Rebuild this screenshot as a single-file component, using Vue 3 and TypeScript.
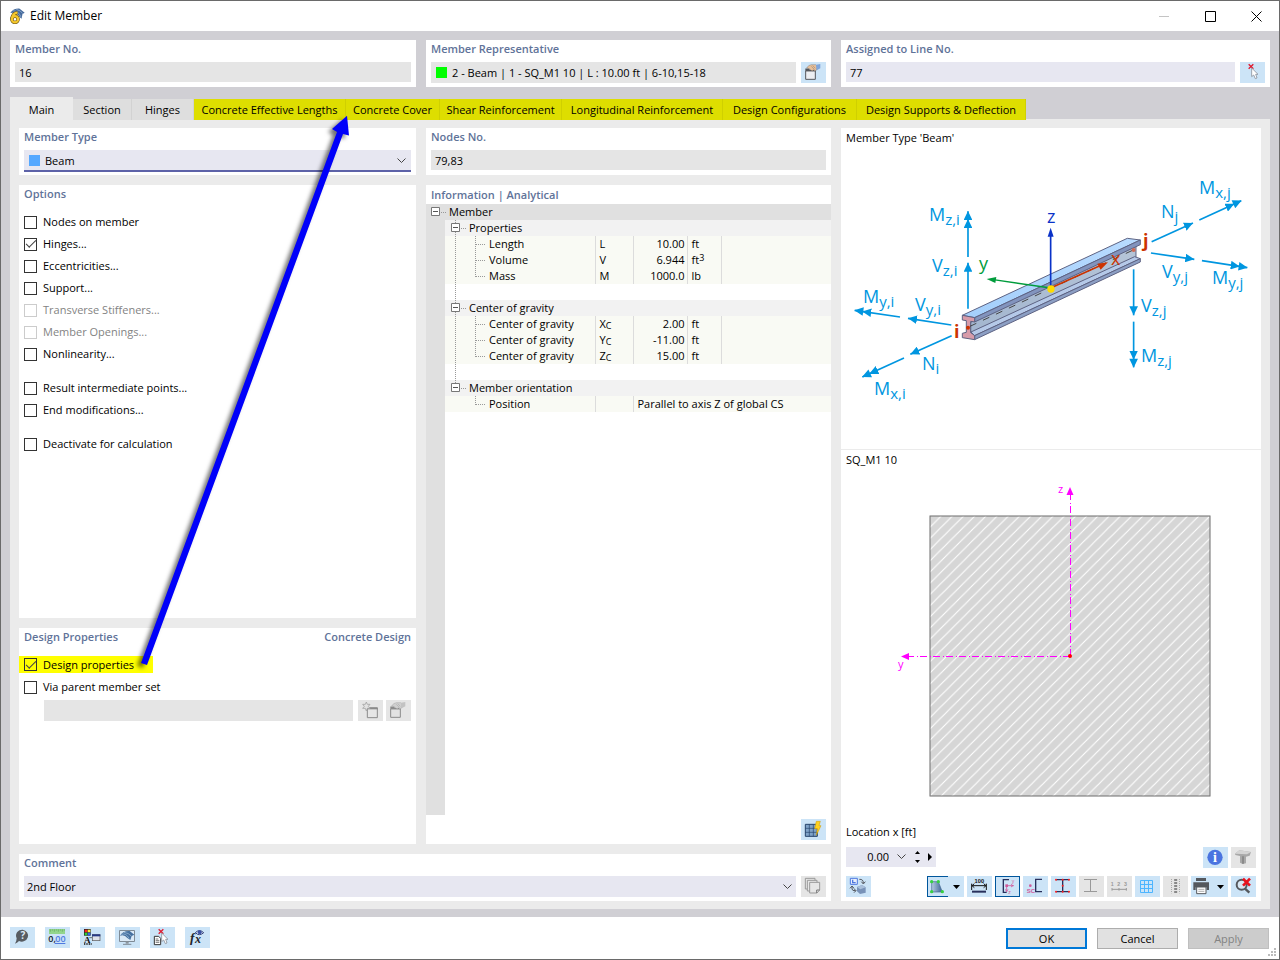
<script setup lang="ts">
import { ref } from 'vue'

interface Tab { label: string; highlighted: boolean }
interface Option { label: string; checked: boolean; disabled?: boolean; gapBefore?: boolean }
interface Leaf { name: string; symbol: string; sub?: string; value: string; unit: string; sup?: string }
interface Group { name: string; rows: Leaf[] }
interface ToolButton { icon: string; label: string; style?: string; menu?: boolean }
interface ForceLabel { main: string; sub: string; x: number; y: number }

const activeTab = ref('Main')
const tabs: Tab[] = [
  { label: 'Main', highlighted: false },
  { label: 'Section', highlighted: false },
  { label: 'Hinges', highlighted: false },
  { label: 'Concrete Effective Lengths', highlighted: true },
  { label: 'Concrete Cover', highlighted: true },
  { label: 'Shear Reinforcement', highlighted: true },
  { label: 'Longitudinal Reinforcement', highlighted: true },
  { label: 'Design Configurations', highlighted: true },
  { label: 'Design Supports & Deflection', highlighted: true },
]

const options = ref<Option[]>([
  { label: 'Nodes on member', checked: false },
  { label: 'Hinges...', checked: true },
  { label: 'Eccentricities...', checked: false },
  { label: 'Support...', checked: false },
  { label: 'Transverse Stiffeners...', checked: false, disabled: true },
  { label: 'Member Openings...', checked: false, disabled: true },
  { label: 'Nonlinearity...', checked: false },
  { label: 'Result intermediate points...', checked: false, gapBefore: true },
  { label: 'End modifications...', checked: false },
  { label: 'Deactivate for calculation', checked: false, gapBefore: true },
])
const designProperties = ref(true)
const viaParentSet = ref(false)

const groups: Group[] = [
  {
    name: 'Properties',
    rows: [
      { name: 'Length', symbol: 'L', value: '10.00', unit: 'ft' },
      { name: 'Volume', symbol: 'V', value: '6.944', unit: 'ft', sup: '3' },
      { name: 'Mass', symbol: 'M', value: '1000.0', unit: 'lb' },
    ],
  },
  {
    name: 'Center of gravity',
    rows: [
      { name: 'Center of gravity', symbol: 'X', sub: 'C', value: '2.00', unit: 'ft' },
      { name: 'Center of gravity', symbol: 'Y', sub: 'C', value: '-11.00', unit: 'ft' },
      { name: 'Center of gravity', symbol: 'Z', sub: 'C', value: '15.00', unit: 'ft' },
    ],
  },
]

const forces: ForceLabel[] = [
  { main: 'M', sub: 'z,i', x: 929, y: 221 },
  { main: 'V', sub: 'z,i', x: 932, y: 272 },
  { main: 'M', sub: 'y,i', x: 863, y: 303 },
  { main: 'V', sub: 'y,i', x: 915, y: 311 },
  { main: 'N', sub: 'i', x: 922, y: 370 },
  { main: 'M', sub: 'x,i', x: 874, y: 395 },
  { main: 'M', sub: 'x,j', x: 1199, y: 194 },
  { main: 'N', sub: 'j', x: 1161, y: 218 },
  { main: 'V', sub: 'y,j', x: 1162, y: 278 },
  { main: 'M', sub: 'y,j', x: 1212, y: 284 },
  { main: 'V', sub: 'z,j', x: 1141, y: 312 },
  { main: 'M', sub: 'z,j', x: 1141, y: 362 },
]

const cursor = '<path d="M35 18V44L41 39L46 50L51 48L47 37H54Z" fill="#fff" stroke="#8c929c" stroke-width="2.5"/>'
const redCross = '<path d="M26 7L40 20M40 7L26 20" stroke="#e0182d" stroke-width="4" fill="none"/>'
const handWindow = (line: string, fill: string, hand: string, cuff: string) =>
  `<path d="M14 26H43V52H14Z" fill="${fill}" stroke="${line}" stroke-width="3"/><path d="M13 22H26" stroke="${line}" stroke-width="5"/><path d="M14 26H43" stroke="${line}" stroke-width="4"/>
   <path d="M17 18L23 11L31 8L44 8L48 12L47 24L41 27L37 23L34 27L29 24L25 20Z" fill="${hand}" stroke="${line}" stroke-width="1"/><path d="M31 13L41 23M35 11L43 19" stroke="${line}" stroke-width="1"/><path d="M45 8L58 6V19L47 25Z" fill="${cuff}"/>`

const icons: Record<string, string> = {
  handWindow: handWindow('#55575c', '#eceef2', '#e8bf98', '#7fa6dc'),
  handWindowOff: handWindow('#8b8b8b', '#e2e2e2', '#cfcfcf', '#c2c2c2'),
  newOff: '<path d="M28 24H58V53H28Z" fill="#e6e6e6" stroke="#8b8b8b" stroke-width="3"/><path d="M27 25H59" stroke="#8b8b8b" stroke-width="6"/><path d="M25 6L28 13L36 13L31 19L36 25L28 25L25 33L22 25L14 25L19 19L14 13L22 13Z" fill="#e2e2e2" stroke="#a5a5a5" stroke-width="2.5"/>',
  pick: redCross + cursor,
  copyOff: '<path d="M13 7H42V39H13Z" fill="#e6e6e6" stroke="#999" stroke-width="3"/><path d="M19 13H48V45H19Z" fill="#e6e6e6" stroke="#999" stroke-width="3"/><path d="M26 19H56V42L48 51H26Z" fill="#e6e6e6" stroke="#999" stroke-width="3"/><path d="M56 42H47V51" fill="none" stroke="#777" stroke-width="3"/>',
  gridFlash: '<path d="M13 16H49V52H13Z" fill="#7fa3c8" stroke="#26446b" stroke-width="3"/><path d="M25 16V52M37 16V52M13 28H49M13 40H49" stroke="#26446b" stroke-width="2"/><path d="M46 7H58L54 20H60L46 49L49 29H41Z" fill="#ffd21f" stroke="#c99400" stroke-width="1.5"/>',
  info: '<circle cx="36" cy="31" r="23" fill="#4a74e0"/><text x="36" y="45" font-family="Liberation Serif, serif" font-weight="bold" font-size="42" text-anchor="middle" fill="#fff">i</text>',
  solidOff: '<path d="M12 20L25 10L60 15L56 26L45 29V49L35 51L27 47V27L13 24Z" fill="#a8a8a8"/><path d="M12 20L25 10L60 15L48 22Z" fill="#d4d4d4"/><path d="M36 28V50" stroke="#858585" stroke-width="5"/>',
  exchange: '<path d="M13 7H34V25H13Z" fill="#e8effc" stroke="#4e79e0" stroke-width="3"/><path d="M20 11V20H29" fill="none" stroke="#4e79e0" stroke-width="4"/><path d="M40 10Q52 9 52 21M46 17L52 24L58 17M18 32V39Q18 45 29 44M12 37L18 30L24 37M24 38L30 44L24 50" fill="none" stroke="#52565e" stroke-width="3"/><path d="M33 33L48 27L59 34V50L42 54L33 46Z" fill="#7892b8"/><path d="M33 33L48 27L59 34L43 40Z" fill="#a9c0dc"/>',
  shape: '<path d="M14 48V17H34L46 48Z" fill="url(#shape)" stroke="#3f6790" stroke-width="2"/><defs><linearGradient id="shape"><stop offset="0" stop-color="#b5cae2"/><stop offset="1" stop-color="#3c6494"/></linearGradient></defs><g fill="#37cf43"><circle cx="14" cy="17" r="5"/><circle cx="34" cy="17" r="5"/><circle cx="46" cy="47" r="5"/><circle cx="14" cy="47" r="5"/></g>',
  dimension: '<text x="37" y="20" font-family="Liberation Sans, sans-serif" font-weight="bold" font-size="17" text-anchor="middle" fill="#111">100</text><path d="M14 23V42M58 23V42M16 29H56M22 23L15 29L22 35M50 23L57 29L50 35" fill="none" stroke="#111" stroke-width="3"/><path d="M15 47H57" stroke="#28305c" stroke-width="6"/>',
  axes: '<path d="M42 11H25V49H35" fill="none" stroke="#28305c" stroke-width="4"/><path d="M35 29H57M35 29V47M48 25L54 29L48 33M31 40L35 47L39 40" fill="none" stroke="#d05a9b" stroke-width="2.5"/><rect x="31" y="25" width="8" height="8" fill="#d05a9b"/><g font-family="Liberation Sans, sans-serif" font-size="15" fill="#d05a9b"><text x="50" y="20">y</text><text x="40" y="53">z</text></g>',
  shear: '<path d="M57 10H38V47H57" fill="none" stroke="#28305c" stroke-width="4"/><circle cx="22" cy="29" r="4" fill="#d05a9b"/><text x="11" y="52" font-family="Liberation Sans, sans-serif" font-weight="bold" font-size="18" fill="#d05a9b">SC</text>',
  points: '<path d="M15 11H54M15 47H54M35 11V47" stroke="#28305c" stroke-width="4"/><g fill="#ff1e1e"><circle cx="15" cy="11" r="3"/><circle cx="35" cy="11" r="3"/><circle cx="54" cy="11" r="3"/><circle cx="35" cy="29" r="3"/><circle cx="15" cy="47" r="3"/><circle cx="35" cy="47" r="3"/><circle cx="54" cy="47" r="3"/></g>',
  sectionOff: '<path d="M15 10.500H54M15 46.500H54M34.500 10V47" stroke="#999" stroke-width="3"/>',
  numbersOff: '<g font-family="Liberation Sans, sans-serif" font-weight="bold" font-size="16" fill="#999"><text x="11" y="30">1</text><text x="31" y="30">2</text><text x="51" y="30">3</text></g><path d="M15 40H58M15 36V44M36 36V44M58 36V44" stroke="#999" stroke-width="3"/>',
  grid: '<path d="M16.500 13.500H52.500V49.500H16.500ZM28.500 13V49M40.500 13V49M16 25.500H53M16 37.500H53" fill="none" stroke="#4db5ff" stroke-width="3"/>',
  scaleOff: '<path d="M38 9V52" stroke="#888" stroke-width="9" stroke-dasharray="6 3"/><path d="M25.500 9V52M49.500 9V52" stroke="#aaa" stroke-width="3" stroke-dasharray="3 3"/>',
  print: '<path d="M15 6H45V15H15Z" fill="#55585d"/><path d="M7 19H54V42H47V34H14V42H7Z" fill="#55585d"/><path d="M17 33H45V53H17Z" fill="#fff" stroke="#55585d" stroke-width="3"/><path d="M22 40H40M22 46H40" stroke="#888" stroke-width="2"/>',
  zoomOff: '<circle cx="32" cy="26" r="15" fill="#d9e7f3" stroke="#55585d" stroke-width="6"/><path d="M42 38L55 50" stroke="#55585d" stroke-width="7"/><path d="M36 8L57 29M57 8L36 29" stroke="#e8121c" stroke-width="8"/>',
  help: '<path d="M38 8A19 18 0 1 1 27 42Q23 47 15 50Q20 42 20 34A19 18 0 0 1 38 8Z" fill="#575c62"/><text x="39" y="37" font-family="Open Sans, sans-serif" font-weight="bold" font-size="30" text-anchor="middle" fill="#dce9f5">?</text>',
  units: '<rect x="12" y="6" width="48" height="15" fill="#92d58c"/><path d="M16 7V14M22 7V11M28 7V14M34 7V11M40 7V14M46 7V11M52 7V14M58 7V11" stroke="#5ea65a" stroke-width="2"/><g font-family="Open Sans, sans-serif" font-weight="600" font-size="27"><text x="10" y="46" fill="#171c2a">0,</text><text x="31" y="46" fill="#4e79e0">00</text></g><path d="M29 49.500H61" stroke="#4e79e0" stroke-width="3"/>',
  display: '<rect x="12" y="6" width="20" height="20" fill="#222"/><rect x="14" y="8" width="8" height="8" fill="#f22"/><rect x="23" y="8" width="8" height="8" fill="#fe3"/><rect x="14" y="17" width="8" height="8" fill="#3c3"/><rect x="23" y="17" width="8" height="8" fill="#36e"/><text x="22" y="47" font-family="Liberation Serif, serif" font-weight="bold" font-size="27" text-anchor="middle" fill="#111">A</text><path d="M12 51H35" stroke="#111" stroke-width="4" stroke-dasharray="3 2"/><path d="M28 32H37" stroke="#333" stroke-width="2"/><rect x="37" y="23" width="23" height="18" fill="#dfe2e9" stroke="#555" stroke-width="2"/><rect x="36" y="22" width="25" height="6" fill="#273a86"/>',
  monitor: '<path d="M13.500 10.500H58.500V43.500H13.500Z" fill="#dbe9f6" stroke="#7f8b96" stroke-width="3"/><path d="M32 44H41V50H32Z" fill="#8a949d"/><path d="M24 52H49" stroke="#7f8b96" stroke-width="3"/><path d="M15 26Q23 11 44 12L58 23L50 27L46 39L37 33Q28 21 15 26Z" fill="#46709f"/><path d="M19 22Q33 17 42 34M27 16Q41 18 49 27" fill="none" stroke="#a6c3e0" stroke-width="2"/>',
  listPick: redCross + '<path d="M13 28H26L32 34V53H13Z" fill="#fff" stroke="#333" stroke-width="3"/><path d="M17 36H25M17 41H28M17 46H28" stroke="#333" stroke-width="2"/>' + cursor,
  formula: '<g font-family="Liberation Serif, serif" font-style="italic" font-weight="bold" fill="#20242c"><text x="15" y="45" font-size="40">f</text><text x="30" y="48" font-size="36">x</text></g><path d="M31 17Q43 5 56 17Q43 29 31 17Z" fill="#e7efff" stroke="#313e74" stroke-width="3"/><circle cx="44" cy="16" r="6" fill="#3950a2"/>',
}

const sectionTools: ToolButton[] = [
  { icon: 'shape', label: 'Shape display', style: 'split-on', menu: true },
  { icon: 'dimension', label: 'Dimensions' },
  { icon: 'axes', label: 'Principal axes', style: 'on' },
  { icon: 'shear', label: 'Shear center' },
  { icon: 'points', label: 'Stress points' },
  { icon: 'sectionOff', label: 'Section parts', style: 'off' },
  { icon: 'numbersOff', label: 'Numbering', style: 'off' },
  { icon: 'grid', label: 'Grid' },
  { icon: 'scaleOff', label: 'Scale', style: 'off' },
  { icon: 'print', label: 'Print', menu: true },
  { icon: 'zoomOff', label: 'Reset zoom' },
]
const footerTools: ToolButton[] = [
  { icon: 'help', label: 'Help' },
  { icon: 'units', label: 'Units and decimal places' },
  { icon: 'display', label: 'Display properties' },
  { icon: 'monitor', label: 'View' },
  { icon: 'listPick', label: 'Select from list' },
  { icon: 'formula', label: 'Formula' },
]
</script>

<template>
  <div class="window">
    <header class="titlebar">
      <svg class="app-icon" viewBox="0 0 51 51" aria-hidden="true">
        <path d="M4 16Q14 1 34 2L50 15L43 19L40 34L32 27Q24 12 4 16Z" fill="#456a9c" />
        <path d="M13 9Q30 9 38 28M23 4Q38 8 44 18" fill="none" stroke="#a9c4e2" stroke-width="2" />
        <path d="M27 15Q10 17 10 36" fill="none" stroke="#6b5512" stroke-width="11" />
        <circle cx="19" cy="36" r="10" fill="none" stroke="#6b5512" stroke-width="11" />
        <path d="M27 15Q10 17 10 36" fill="none" stroke="#f4c72c" stroke-width="7" />
        <circle cx="19" cy="36" r="10" fill="none" stroke="#f4c72c" stroke-width="7" />
      </svg>
      <h1>Edit Member</h1>
      <button class="sys" aria-label="Minimize" disabled><svg viewBox="0 0 11 11"><path d="M0 5.500H10" stroke="#c4c4c4" /></svg></button>
      <button class="sys" aria-label="Maximize"><svg viewBox="0 0 11 11"><path d="M.5 .5H10.500V10.500H.5Z" fill="none" stroke="#000" /></svg></button>
      <button class="sys" aria-label="Close"><svg viewBox="0 0 11 11"><path d="M.5 .5L10.500 10.500M10.500 .5L.5 10.500" stroke="#000" /></svg></button>
    </header>

    <main class="body">
      <div class="summary">
        <section class="card">
          <label class="caption" for="member-no">Member No.</label>
          <div class="line"><input id="member-no" class="field readonly" value="16" readonly /></div>
        </section>
        <section class="card">
          <label class="caption" for="member-rep">Member Representative</label>
          <div class="line">
            <div class="field readonly with-swatch">
              <i class="swatch green"></i>
              <input id="member-rep" value="2 - Beam | 1 - SQ_M1 10 | L : 10.00 ft | 6-10,15-18" readonly />
            </div>
            <button class="tool" aria-label="Edit representative"><svg viewBox="0 0 75 63" v-html="icons.handWindow" /></button>
          </div>
        </section>
        <section class="card">
          <label class="caption" for="line-no">Assigned to Line No.</label>
          <div class="line">
            <input id="line-no" class="field" value="77" />
            <button class="tool" aria-label="Pick line"><svg viewBox="0 0 75 63" v-html="icons.pick" /></button>
          </div>
        </section>
      </div>

      <nav class="tabs" role="tablist">
        <button
          v-for="tab in tabs" :key="tab.label" role="tab" class="tab"
          :class="{ active: tab.label === activeTab, highlighted: tab.highlighted }"
          :aria-selected="tab.label === activeTab" @click="activeTab = tab.label"
        >{{ tab.label }}</button>
      </nav>

      <div class="page">
        <div class="left-area">
          <div class="column">
            <section class="card">
              <label class="caption" for="member-type">Member Type</label>
              <div class="line">
                <div class="field with-swatch focused">
                  <i class="swatch blue"></i>
                  <select id="member-type"><option>Beam</option></select>
                  <svg class="chevron" viewBox="0 0 9 6"><path d="M.5 .5L4.500 4.500L8.500 .5" /></svg>
                </div>
              </div>
            </section>

            <section class="card options">
              <h2 class="caption">Options</h2>
              <div class="checks">
                <label v-for="opt in options" :key="opt.label" class="check" :class="{ gap: opt.gapBefore, disabled: opt.disabled }">
                  <input v-model="opt.checked" type="checkbox" :disabled="opt.disabled" />{{ opt.label }}
                </label>
              </div>
            </section>

            <section class="card design">
              <div class="heading-pair">
                <h2 class="caption">Design Properties</h2>
                <h2 class="caption">Concrete Design</h2>
              </div>
              <div class="checks">
                <label class="check marked"><input v-model="designProperties" type="checkbox" /><span>Design properties</span></label>
                <label class="check"><input v-model="viaParentSet" type="checkbox" />Via parent member set</label>
              </div>
              <div class="line parent-set">
                <input class="field readonly" aria-label="Parent member set" disabled />
                <button class="tool off" aria-label="New member set" disabled><svg viewBox="0 0 75 63" v-html="icons.newOff" /></button>
                <button class="tool off last" aria-label="Edit member set" disabled><svg viewBox="0 0 75 63" v-html="icons.handWindowOff" /></button>
              </div>
            </section>
          </div>

          <div class="column">
            <section class="card">
              <label class="caption" for="nodes-no">Nodes No.</label>
              <div class="line"><input id="nodes-no" class="field readonly" value="79,83" readonly /></div>
            </section>

            <section class="card info">
              <h2 class="caption">Information | Analytical</h2>
              <div class="tree">
                <table>
                  <colgroup><col class="c-gutter" /><col class="c-name" /><col class="c-symbol" /><col class="c-value" /><col class="c-unit" /><col /></colgroup>
                  <tbody>
                    <tr class="root">
                      <th colspan="6">
                        <svg class="mark" width="23" height="16"><path class="dots" d="M15 8.500H21" /><path class="box" d="M5.500 3.500H13.500V11.500H5.500Z" /><path class="minus" d="M7 7.500H12" /></svg>Member
                      </th>
                    </tr>
                    <template v-for="group in groups" :key="group.name">
                      <tr class="group">
                        <td class="gutter"></td>
                        <th colspan="5">
                          <svg class="mark" width="24" height="16"><path class="dots" d="M10.500 0V16M16 8.500H22" /><path class="box" d="M6.500 3.500H14.500V11.500H6.500Z" /><path class="minus" d="M8 7.500H13" /></svg>{{ group.name }}
                        </th>
                      </tr>
                      <tr v-for="(row, i) in group.rows" :key="row.symbol" class="leaf">
                        <td class="gutter"></td>
                        <td class="name">
                          <svg class="mark" width="44" height="16"><path class="dots" :d="i === group.rows.length - 1 ? 'M10.500 0V16M30.500 0V9M31 8.500H41' : 'M10.500 0V16M30.500 0V16M31 8.500H41'" /></svg>{{ row.name }}
                        </td>
                        <td>{{ row.symbol }}<sub v-if="row.sub">{{ row.sub }}</sub></td>
                        <td class="value">{{ row.value }}</td>
                        <td>{{ row.unit }}<sup v-if="row.sup">{{ row.sup }}</sup></td>
                        <td></td>
                      </tr>
                      <tr class="blank">
                        <td class="gutter"></td>
                        <td colspan="5" class="name"><svg class="mark" width="24" height="16"><path class="dots" d="M10.500 0V16" /></svg></td>
                      </tr>
                    </template>
                    <tr class="group">
                      <td class="gutter"></td>
                      <th colspan="5">
                        <svg class="mark" width="24" height="16"><path class="dots" d="M10.500 0V4M16 8.500H22" /><path class="box" d="M6.500 3.500H14.500V11.500H6.500Z" /><path class="minus" d="M8 7.500H13" /></svg>Member orientation
                      </th>
                    </tr>
                    <tr class="leaf">
                      <td class="gutter"></td>
                      <td class="name"><svg class="mark" width="44" height="16"><path class="dots" d="M30.500 0V9M31 8.500H41" /></svg>Position</td>
                      <td></td>
                      <td colspan="3">Parallel to axis Z of global CS</td>
                    </tr>
                  </tbody>
                </table>
              </div>
              <div class="info-tools">
                <button class="tool" aria-label="Recalculate"><svg viewBox="0 0 75 63" v-html="icons.gridFlash" /></button>
              </div>
            </section>
          </div>

          <section class="card comment">
            <label class="caption" for="comment">Comment</label>
            <div class="line">
              <div class="field combo">
                <select id="comment"><option>2nd Floor</option></select>
                <svg class="chevron" viewBox="0 0 9 6"><path d="M.5 .5L4.500 4.500L8.500 .5" /></svg>
              </div>
              <button class="tool off" aria-label="Comment library" disabled><svg viewBox="0 0 75 63" v-html="icons.copyOff" /></button>
            </div>
          </section>
        </div>

        <section class="card preview">
          <h2 class="plain">Member Type 'Beam'</h2>
          <svg class="beam" viewBox="841 148 420 301" role="img" aria-label="Beam with internal forces">
            <defs>
              <linearGradient id="top" x1="0" y1="1" x2="1" y2="0"><stop offset="0" stop-color="#a4cffb" /><stop offset="1" stop-color="#b8dbff" /></linearGradient>
              <linearGradient id="web" x1="0" y1="1" x2="1" y2="0"><stop offset="0" stop-color="#a3b6cf" /><stop offset="1" stop-color="#b6c5d8" /></linearGradient>
              <marker id="force" markerUnits="userSpaceOnUse" markerWidth="30" markerHeight="26" refX="27" refY="13" orient="auto"><path d="M0 0L27 13L0 26Z" fill="#0096e0" /></marker>
              <marker id="moment" markerUnits="userSpaceOnUse" markerWidth="54" markerHeight="26" refX="50" refY="13" orient="auto"><path d="M0 0L27 13L0 26ZM24 0L51 13L24 26Z" fill="#0096e0" /></marker>
            </defs>
            <g transform="translate(840 160) scale(.3333)">
              <g stroke="#5d6283" stroke-width="3" stroke-linejoin="round">
                <path d="M392 487L888 258V292L392 520Z" fill="url(#web)" />
                <path d="M393 516L884 290L901 296L404 527Z" fill="#b5c9e8" />
                <path d="M404 527L901 296V306L404 539Z" fill="#8c9fc4" />
                <path d="M367 466L862 235L901 240L404 473Z" fill="url(#top)" />
                <path d="M404 473L901 240V254L404 486Z" fill="#8294be" />
                <path d="M367 466L404 473V486L392 484V518L404 527V539L367 533V520L379 517V482L367 480Z" fill="#d79ba9" />
              </g>
              <path d="M390 499L882 269" stroke="#444" stroke-width="3" stroke-dasharray="21 22" />
              <circle cx="384" cy="503" r="6" fill="#cc3300" /><circle cx="881" cy="270" r="6" fill="#cf6a55" />
              <g stroke="#0096e0" stroke-width="5" fill="none">
                <path d="M384 291V154" marker-end="url(#moment)" />
                <path d="M384 446V308" marker-end="url(#force)" />
                <path d="M180 471L44 451" marker-end="url(#moment)" />
                <path d="M334 495L204 475" marker-end="url(#force)" />
                <path d="M335 527L211 583" marker-end="url(#force)" />
                <path d="M192 594L67 651" marker-end="url(#moment)" />
                <path d="M935 245L1059 189" marker-end="url(#force)" />
                <path d="M1078 180L1204 122" marker-end="url(#moment)" />
                <path d="M933 279L1063 298" marker-end="url(#force)" />
                <path d="M1086 302L1222 323" marker-end="url(#moment)" />
                <path d="M881 328V466" marker-end="url(#force)" />
                <path d="M881 485V622" marker-end="url(#moment)" />
              </g>
              <path d="M632 384V220" stroke="#0a32c8" stroke-width="5" /><path d="M623 230L632 203L641 230Z" fill="#0a32c8" />
              <path d="M632 384L460 359" stroke="#009c3c" stroke-width="4" /><path d="M469 351L440 357L466 369Z" fill="#009c3c" />
              <path d="M632 384L783 316" stroke="#cc3300" stroke-width="5" /><path d="M772 311L804 307L782 329Z" fill="#cc3300" />
              <circle cx="633" cy="387" r="11" fill="#ffdc00" />
            </g>
            <g class="force-text">
              <text v-for="f in forces" :key="f.main + f.sub" :x="f.x" :y="f.y">{{ f.main }}<tspan class="force-sub" dy="4">{{ f.sub }}</tspan></text>
            </g>
            <g class="axis-text">
              <text x="1047" y="223" fill="#0a32c8">z</text>
              <text x="979" y="270" fill="#009c3c">y</text>
              <text x="1111" y="265" fill="#cc3300">x</text>
              <text class="node" x="954" y="338" fill="#cc3300">i</text>
              <text class="node" x="1143" y="247" fill="#cc3300">j</text>
            </g>
          </svg>
          <h2 class="plain divided">SQ_M1 10</h2>
          <svg class="cross" viewBox="841 470 420 352" role="img" aria-label="Square section SQ_M1 10">
            <defs>
              <pattern id="hatch" width="11.200" height="11.200" patternUnits="userSpaceOnUse" patternTransform="translate(930 516)">
                <path d="M-2 13.200L13.200 -2M-2 2L2 -2M9.200 13.200L13.200 9.200" stroke="#fff" stroke-width="1.100" />
              </pattern>
            </defs>
            <rect x="930" y="516" width="280" height="280" fill="#d6d6d6" />
            <rect x="930" y="516" width="280" height="280" fill="url(#hatch)" stroke="#6c6c6c" />
            <path d="M1070.500 656V494M1070 656.500H908" stroke="#f0f" stroke-dasharray="7 2 1 3" />
            <path d="M1066.500 495L1070 487L1073.500 495Z M909 653L901 656.500L909 660Z" fill="#f0f" />
            <circle cx="1070" cy="656" r="2" fill="#f00" />
            <g class="section-axis"><text x="1058" y="493">z</text><text x="898" y="668">y</text></g>
          </svg>
          <label class="plain" for="location">Location x [ft]</label>
          <div class="location-row">
            <div class="field spinner">
              <input id="location" value="0.00" />
              <button aria-label="Show locations"><svg class="chevron" viewBox="0 0 9 6"><path d="M.5 .5L4.500 4.500L8.500 .5" /></svg></button>
              <span class="steps">
                <button aria-label="Increase"><svg viewBox="0 0 5 3"><path d="M0 3L2.500 0L5 3Z" /></svg></button>
                <button aria-label="Decrease"><svg viewBox="0 0 5 3"><path d="M0 0L2.500 3L5 0Z" /></svg></button>
              </span>
              <button aria-label="Next location"><svg class="next" viewBox="0 0 4 8"><path d="M0 0L4 4L0 8Z" /></svg></button>
            </div>
            <span class="spring"></span>
            <button class="tool" aria-label="Section information"><svg viewBox="0 0 75 63" v-html="icons.info" /></button>
            <button class="tool off" aria-label="3D view" disabled><svg viewBox="0 0 75 63" v-html="icons.solidOff" /></button>
          </div>
          <div class="section-tools">
            <button class="tool" aria-label="Swap views"><svg viewBox="0 0 75 63" v-html="icons.exchange" /></button>
            <span class="spring"></span>
            <button v-for="tool in sectionTools" :key="tool.icon" class="tool" :class="[tool.style, { menu: tool.menu }]" :aria-label="tool.label" :disabled="tool.style === 'off'">
              <svg viewBox="0 0 75 63" v-html="icons[tool.icon]" />
              <svg v-if="tool.menu" class="menu-arrow" viewBox="0 0 7 4"><path d="M0 0H7L3.500 4Z" /></svg>
            </button>
          </div>
        </section>
      </div>
    </main>

    <footer class="footer">
      <button v-for="tool in footerTools" :key="tool.icon" class="tool" :aria-label="tool.label"><svg viewBox="0 0 75 63" v-html="icons[tool.icon]" /></button>
      <span class="spring"></span>
      <button class="command default">OK</button>
      <button class="command">Cancel</button>
      <button class="command" disabled>Apply</button>
      <svg class="grip" width="9" height="9" aria-hidden="true"><path d="M6 0H8V2H6ZM3 3H5V5H3ZM6 3H8V5H6ZM0 6H2V8H0ZM3 6H5V8H3ZM6 6H8V8H6Z" fill="#bbb" /></svg>
    </footer>

    <svg class="callout" width="216" height="560" viewBox="138 110 216 560" aria-hidden="true">
      <path d="M141 663L337 132L332 129L347 115.700L349 135.500L343 134L147 665Z" fill="#0000fa" />
    </svg>
  </div>
</template>

<style>
body { margin: 0; }
</style>

<style scoped>
* { box-sizing: border-box; }
.window {
  position: relative;
  display: flex;
  flex-direction: column;
  min-height: 100vh;
  border: 1px solid #6a6a6a;
  background: #fff;
  color: #000;
  font: 11px/16px "Open Sans", "Noto Sans", sans-serif;
}
button, input, select { font: inherit; color: inherit; margin: 0; padding: 0; border: 0; background: none; border-radius: 0; }
h1, h2 { margin: 0; font: inherit; }
button svg { display: block; }

.titlebar { display: flex; align-items: center; height: 30px; padding-left: 8px; }
.app-icon { width: 16px; height: 16px; margin-right: 5px; }
.titlebar h1 { flex: 1; font-size: 12px; }
.sys { width: 46px; height: 28px; display: grid; place-items: center; }
.sys svg { width: 11px; height: 11px; }

.body { flex: 1; display: flex; flex-direction: column; padding: 9px 9px 8px; background: #d0cfd4; }
.summary { display: grid; grid-template-columns: 406fr 405fr 429fr; gap: 10px; }
.card { background: #fff; min-width: 0; min-height: 47px; }
.caption { display: block; padding: 0 5px; line-height: 18px; font-weight: 600; color: #5f7399; }
.line { display: flex; gap: 5px; margin: 4px 5px 0; }
.field { flex: 1; min-width: 0; height: 20px; padding: 0 4px; background: #e7e7f1; }
.readonly { background: #e5e5e5; }
.with-swatch { display: flex; align-items: center; height: 21px; padding: 0 5px; }
.with-swatch input, .with-swatch select { flex: 1; min-width: 0; }
.swatch { width: 11px; height: 11px; margin-right: 5px; }
.green { background: #0f0; }
.blue { background: #55a8ff; }
.focused { height: 22px; padding-top: 1px; border-bottom: 2px solid #5d62a8; }
select { appearance: none; outline: 0; }
.combo { display: flex; align-items: center; height: 21px; padding-left: 3px; }
.combo select { flex: 1; }
.chevron { width: 9px; height: 6px; fill: none; stroke: #444; }
.tool { flex: none; width: 25px; height: 21px; background: #cce4f7; }
.tool > svg { width: 25px; height: 21px; }
.tool.off { background: #e5e5e5; }
.tool.on { outline: 1px solid #00569c; outline-offset: -1px; }

.tabs {
  display: grid;
  grid-template-columns: 63px 59px 62px 152px 94px 122px 161px 134px 169px;
  align-items: end;
  margin-top: 10px;
  height: 23px;
  position: relative;
  z-index: 1;
}
.tab { height: 21px; background: #dedede; border-right: 1px solid #d2d2d2; white-space: nowrap; }
.tab.highlighted { background: #dede00; border-right-color: #d0d000; }
.tab.active { height: 23px; padding-top: 3px; background: #ebebeb; border: 0; }
.page { flex: 1; display: grid; grid-template-columns: 812fr 420fr; gap: 10px; margin-top: -1px; padding: 9px 9px 8px; background: #ebebeb; }
.left-area { display: grid; grid-template-columns: 397fr 405fr; grid-template-rows: 1fr auto; gap: 10px; }
.column { display: flex; flex-direction: column; gap: 10px; min-width: 0; }
.comment { grid-column: 1 / -1; }
.options { flex: 433; }
.design { flex: 216; }
.checks { padding: 8px 5px 0; }
.check { display: flex; align-items: center; height: 22px; gap: 6px; }
.check.gap { margin-top: 12px; }
.check.disabled { color: #838383; }
.check.marked { height: 17px; width: 134px; margin: 2px 0 3px -5px; padding-left: 5px; background: #ff0; }
.check input { appearance: none; width: 13px; height: 13px; border: 1px solid #333; background: #fff; display: grid; place-items: center; }
.check.marked input { background: #ff0; }
.check.disabled input { border-color: #ccc; }
.check input:checked::after { content: ""; width: 9px; height: 4px; margin-top: -3px; border: solid #444; border-width: 0 0 1px 1px; transform: rotate(-45deg); }
.heading-pair { display: flex; justify-content: space-between; }
.parent-set { margin: 2px 5px 0 25px; }
.parent-set .field { height: 21px; }
.parent-set .last { margin-left: -2px; }

.info { flex: 1; display: flex; flex-direction: column; }
.info .caption { line-height: 19px; }
.tree { flex: 1; background: linear-gradient(to right, #e0e0e0 19px, #fff 19px); }
table { width: 100%; table-layout: fixed; border-collapse: collapse; }
.c-gutter { width: 19px; }
.c-name { width: 150px; }
.c-symbol { width: 38px; }
.c-value { width: 54px; }
.c-unit { width: 34px; }
td, th { height: 16px; padding: 0 0 0 4px; line-height: 16px; font-weight: 400; text-align: left; white-space: nowrap; }
th, td.name, td.gutter { padding: 0; }
.root th { background: #e0e0e0; }
.group th { background: #f2f2f2; }
.leaf td:not(.gutter) { background: #f9faf4; border-right: 1px solid #dcdcdc; }
.leaf td:last-child { border-right: 0; }
.leaf td.value { text-align: right; padding-right: 2px; }
.mark { float: left; }
.dots { fill: none; stroke: #999; stroke-dasharray: 1 1; }
.box { fill: #fff; stroke: #777; }
.minus { stroke: #555; }
sub, sup { font-size: 9px; line-height: 0; }
sub { vertical-align: -1px; }
sup { vertical-align: 3px; }
.info-tools { display: flex; justify-content: flex-end; padding: 4px 5px; }

.preview { display: flex; flex-direction: column; padding-bottom: 4px; }
.plain { padding: 0 5px; line-height: 20px; }
.beam { flex: 301; width: 100%; min-height: 0; }
.cross { flex: 352; width: 100%; min-height: 0; }
.divided { border-top: 1px solid #ebebeb; }
.force-text { font-size: 18px; fill: #0096e0; }
.force-sub { font-size: 15px; }
.axis-text { font-size: 18px; }
.node { font-weight: 700; }
.section-axis { font-size: 11px; fill: #f0f; }
.location-row, .section-tools { display: flex; gap: 3px; padding: 0 5px; }
.location-row { margin: 5px 0 8px; }
.spring { flex: 1; }
.spinner { flex: none; display: flex; align-items: center; justify-content: space-between; width: 90px; padding: 0 4px 0 7px; }
.spinner input { width: 36px; text-align: right; }
.steps { display: flex; flex-direction: column; gap: 6px; }
.steps svg { width: 5px; height: 3px; }
.next { width: 4px; height: 8px; }
.tool.menu { display: flex; align-items: center; width: 37px; }
.tool.menu > .menu-arrow { width: 7px; height: 4px; margin-left: 1px; }
.split-on { background: linear-gradient(#00569c, #00569c) 0 0 / 21px 1px no-repeat, linear-gradient(#00569c, #00569c) 0 100% / 21px 1px no-repeat, linear-gradient(#00569c, #00569c) 0 0 / 1px 100% no-repeat, #cce4f7; }

.footer { position: relative; display: flex; align-items: flex-start; gap: 10px; height: 42px; padding: 10px 10px 0 9px; }
.command { width: 81px; height: 21px; background: #e1e1e1; border: 1px solid #adadad; margin-top: 1px; }
.command.default { border: 2px solid #0078d7; }
.command:disabled { background: #ccc; border-color: #bfbfbf; color: #838383; }
.grip { position: absolute; right: 2px; bottom: 2px; }
.callout { position: absolute; left: 137px; top: 109px; pointer-events: none; z-index: 2; filter: drop-shadow(-4px 3px 2px rgba(0, 0, 0, 0.55)); }
</style>
